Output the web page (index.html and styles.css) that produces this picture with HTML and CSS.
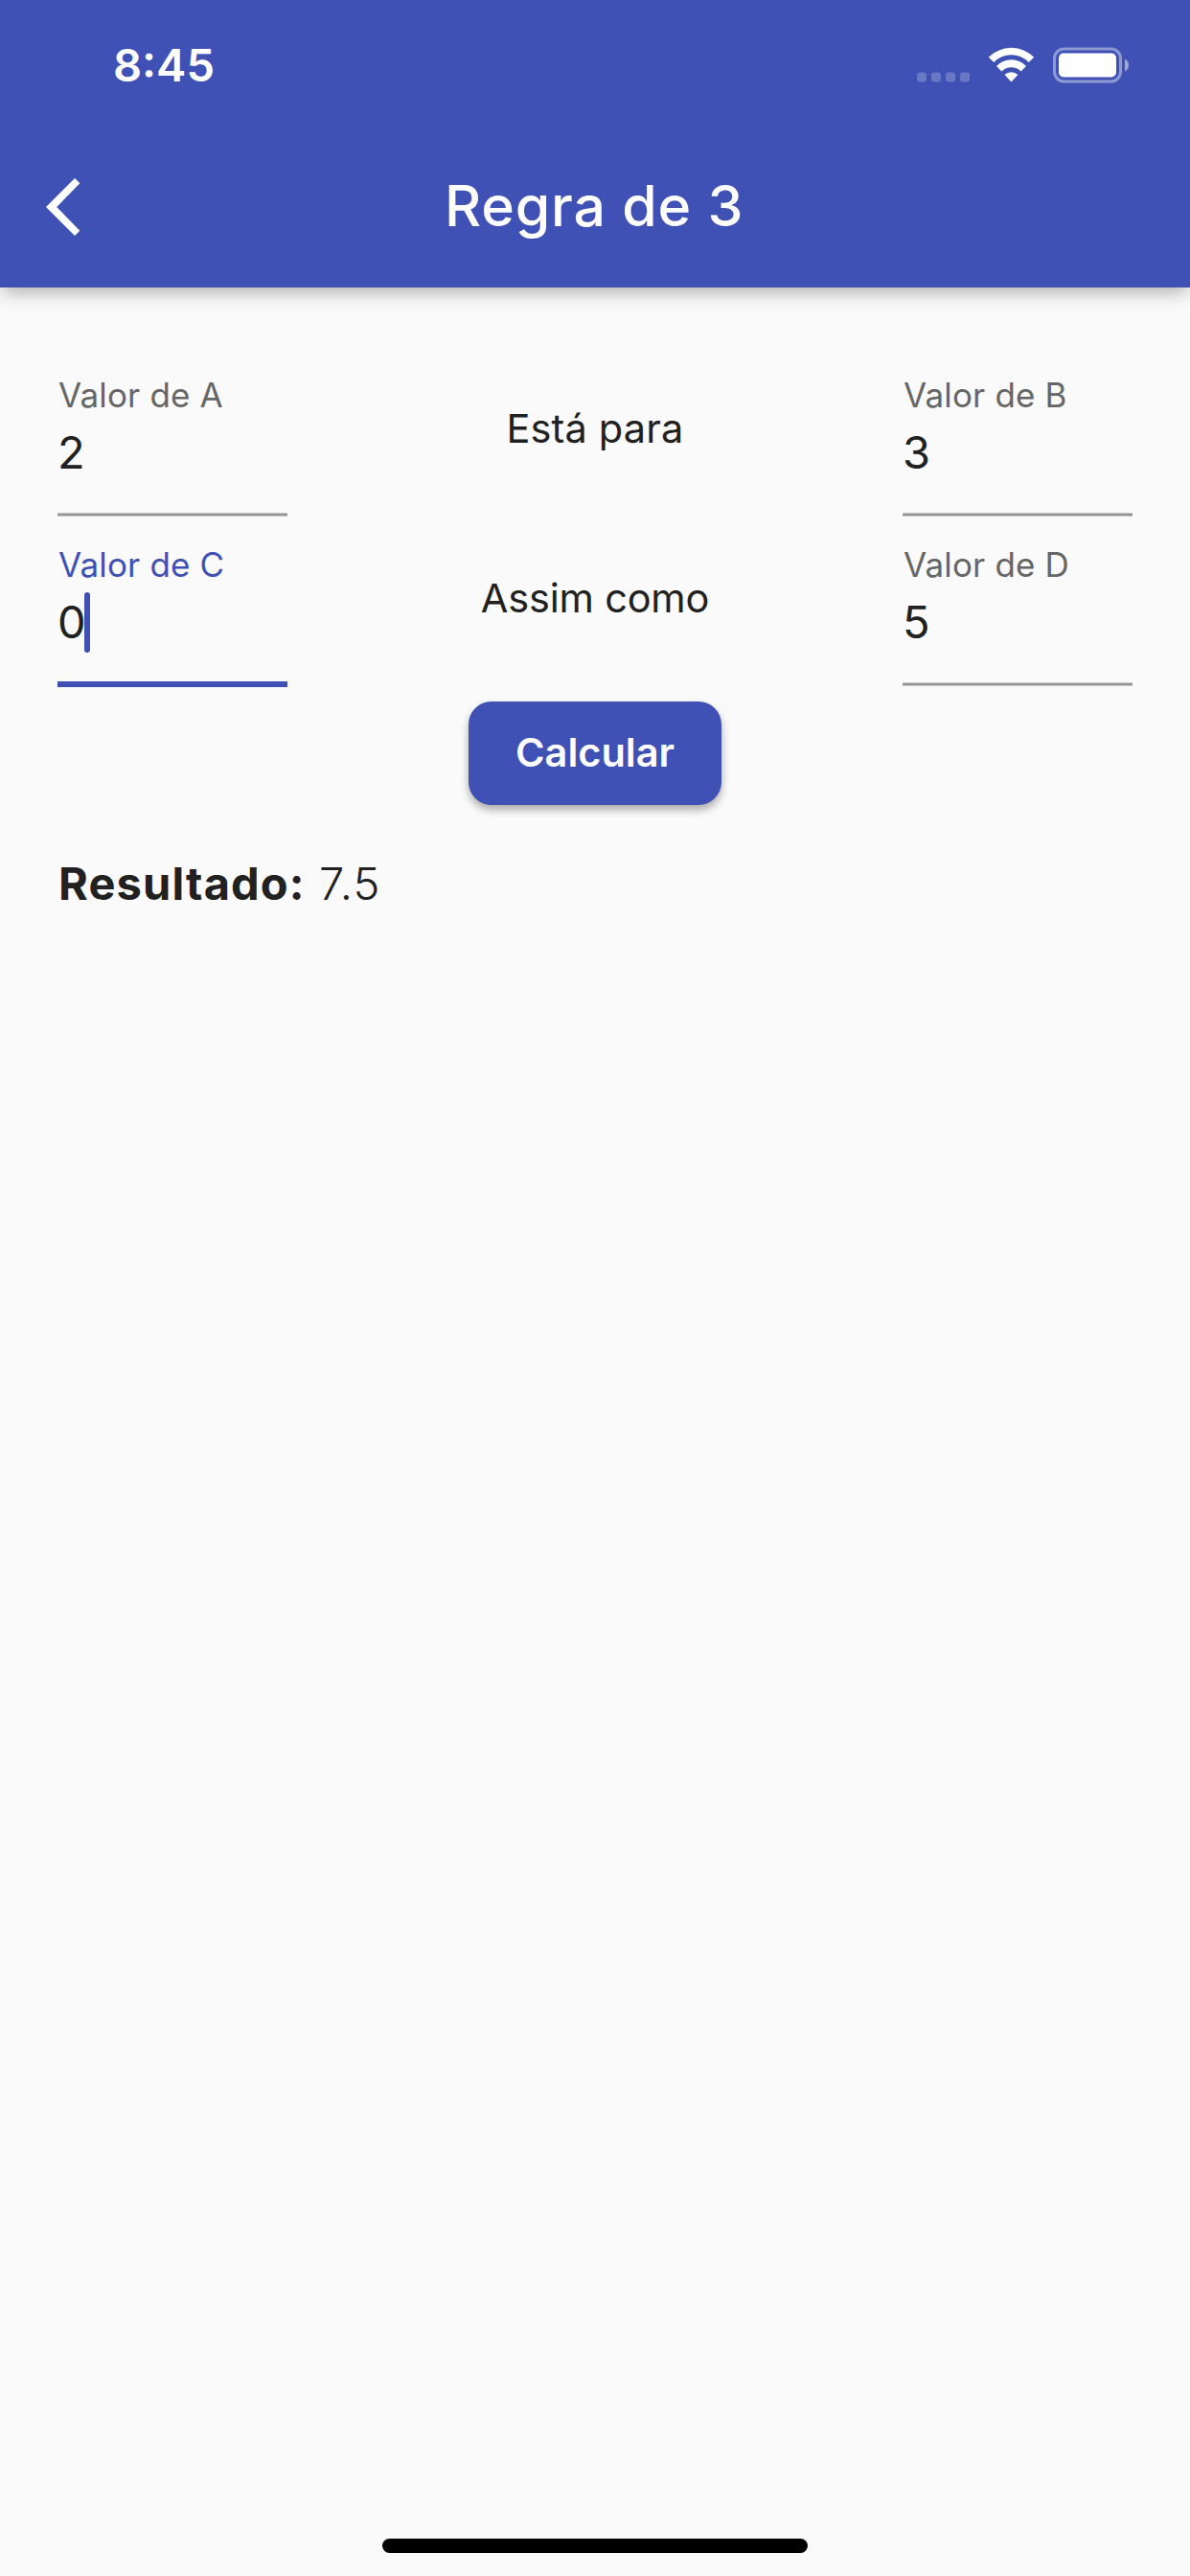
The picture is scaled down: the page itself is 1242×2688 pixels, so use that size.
FILE: index.html
```html
<!DOCTYPE html>
<html lang="pt-BR">
<head>
<meta charset="utf-8">
<title>Regra de 3</title>
<link rel="stylesheet" href="styles.css">
</head>
<body>
<div class="screen">
  <header class="header">
    <div class="status">
      <span class="time">8:45</span>
      <svg class="status-icons" width="222" height="38" viewBox="957 48.5 222 38" aria-hidden="true">
        <g fill="#fff" fill-opacity=".22">
          <rect x="957" y="75" width="10" height="10" rx="3"/>
          <rect x="972" y="75" width="10" height="10" rx="3"/>
          <rect x="987" y="75" width="10" height="10" rx="3"/>
          <rect x="1002" y="75" width="10" height="10" rx="3"/>
        </g>
        <g fill="#fff">
          <path d="M1031.8 59.3A33 33 0 0 1 1079.2 59.3L1073.7 64.6A25.2 25.2 0 0 0 1037.3 64.6Z"/>
          <path d="M1040 68.6A21 21 0 0 1 1071 68.6L1065.5 73.9A14 14 0 0 0 1045.5 73.9Z"/>
          <path d="M1048.5 77.6A10 10 0 0 1 1062.5 77.6L1055.5 85Z"/>
          <rect x="1105" y="55" width="60" height="25" rx="5"/>
        </g>
        <rect x="1100.5" y="50.5" width="69" height="34" rx="10" fill="none" stroke="#fff" stroke-opacity=".42" stroke-width="3"/>
        <path d="M1174 61Q1178 63 1178 67.5T1174 74Z" fill="#fff" fill-opacity=".5"/>
      </svg>
    </div>
    <div class="toolbar">
      <svg class="back" width="36" height="60" viewBox="0 0 36 60" aria-label="Voltar">
        <path d="M30 0L35.3 5.3L11.2 30L35.3 54.7L30 60L0 30Z" fill="#fff"/>
      </svg>
      <h1 class="title">Regra de 3</h1>
    </div>
  </header>
  <main class="content">
    <div class="grid">
      <div class="field">
        <label class="label">Valor de A</label>
        <div class="value">2</div>
        <div class="line"></div>
      </div>
      <div class="relation">Está para</div>
      <div class="field">
        <label class="label">Valor de B</label>
        <div class="value">3</div>
        <div class="line"></div>
      </div>
      <div class="field focused">
        <label class="label">Valor de C</label>
        <div class="value">0<span class="caret"></span></div>
        <div class="line"></div>
      </div>
      <div class="relation wide">Assim como</div>
      <div class="field">
        <label class="label">Valor de D</label>
        <div class="value">5</div>
        <div class="line"></div>
      </div>
    </div>
    <button class="button">Calcular</button>
    <p class="result"><strong>Resultado:</strong> 7.5</p>
  </main>
  <div class="home-bar"></div>
</div>
</body>
</html>
```
FILE: styles.css
```css
* {
  box-sizing: border-box;
}

body {
  margin: 0;
  background: #fafafa;
  color: #212121;
  font-family: Inter, "Liberation Sans", sans-serif;
}

.screen {
  display: flex;
  flex-direction: column;
  width: 1242px;
  height: 2688px;
  background: #fafafa;
}

.header {
  height: 300px;
  background: #3f51b5;
  color: #fff;
  box-shadow: 0 8px 18px -3px rgba(0, 0, 0, .31);
}

.status {
  display: flex;
  justify-content: space-between;
  align-items: center;
  height: 132px;
  padding: 3px 63px 0 118px;
}

.time {
  font-size: 47px;
  font-weight: 600;
  line-height: 56px;
}

.status-icons {
  display: block;
}

.toolbar {
  display: flex;
  align-items: center;
  height: 168px;
  padding-left: 48px;
}

.title {
  margin: -2px 0 0 380px;
  font-size: 59px;
  font-weight: 500;
  line-height: 72px;
  letter-spacing: .8px;
  white-space: nowrap;
}

.content {
  display: flex;
  flex: 1;
  flex-direction: column;
  padding: 63px 60px 0;
}

.grid {
  display: grid;
  grid-template-columns: 240px 1fr 240px;
  grid-auto-rows: 177px;
}

.field {
  display: flex;
  flex-direction: column;
  padding: 27px 0 1px;
}

.label {
  padding-left: 1px;
  color: #666;
  font-size: 35px;
  font-weight: 400;
  line-height: 44px;
  letter-spacing: .15px;
}

.value {
  display: flex;
  align-items: center;
  height: 58px;
  margin-top: 9px;
  font-size: 47px;
  line-height: 58px;
}

.line {
  height: 4px;
  margin-top: auto;
  border: solid #c8c8c8;
  border-width: 1px 0;
  background: #949494;
}

.focused {
  padding-bottom: 0;
}

.focused .label {
  color: #3f51b5;
}

.focused .line {
  height: 6px;
  border: 0;
  background: #3f51b5;
}

.caret {
  width: 6px;
  height: 63px;
  margin-left: -1.5px;
  border-radius: 3px;
  background: #3f51b5;
}

.relation {
  padding-top: 59px;
  font-size: 41.5px;
  font-weight: 400;
  line-height: 50px;
  letter-spacing: .17px;
  text-align: center;
}

.wide {
  letter-spacing: -.2px;
}

.button {
  align-self: center;
  width: 264px;
  height: 108px;
  margin-top: 15px;
  padding: 0 0 2px;
  border: 0;
  border-radius: 24px;
  background: #3f51b5;
  box-shadow: 0 5px 9px rgba(0, 0, 0, .32);
  color: #fff;
  font: 600 41.5px/50px Inter, "Liberation Sans", sans-serif;
}

.result {
  margin: 53px 0 0 1px;
  font-size: 47px;
  font-weight: 350;
  line-height: 58px;
  letter-spacing: 1.15px;
}

.result strong {
  font-weight: 700;
}

.home-bar {
  align-self: center;
  width: 444px;
  height: 15px;
  margin-bottom: 24px;
  border-radius: 8px;
  background: #000;
}
```
